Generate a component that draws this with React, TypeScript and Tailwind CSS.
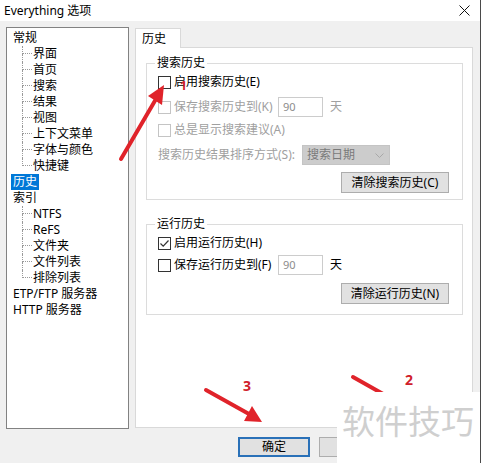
import type { ReactNode } from 'react';

const generalItems = ['界面', '首页', '搜索', '结果', '视图', '上下文菜单', '字体与颜色', '快捷键'];
const indexItems = ['NTFS', 'ReFS', '文件夹', '文件列表', '排除列表'];

function RootNode({ label, selected }: { label: string; selected?: boolean }) {
  return (
    <div className="flex h-4 items-center pl-[4px]">
      <span className={selected ? 'bg-[#0078d7] px-[2px] leading-4 text-white' : 'px-[2px] leading-4'}>{label}</span>
    </div>
  );
}

function ChildNode({ label, last }: { label: string; last?: boolean }) {
  return (
    <div className="flex h-4 items-center">
      <div className="flex h-full w-[10px] flex-col">
        <div className="h-1/2 border-b border-l border-dotted border-[#9a9a9a]" />
        <div className={last ? 'h-1/2' : 'h-1/2 border-l border-dotted border-[#9a9a9a]'} />
      </div>
      <span className="pl-[1px] leading-4">{label}</span>
    </div>
  );
}

function Checkbox({ checked, disabled }: { checked?: boolean; disabled?: boolean }) {
  return (
    <span
      className={`flex h-[13px] w-[13px] shrink-0 items-center justify-center border bg-white ${
        disabled ? 'border-[#c4c4c4]' : 'border-[#333333]'
      }`}
    >
      {checked && (
        <svg width="11" height="11" viewBox="0 0 11 11">
          <polyline points="1.5,5.5 4.2,8.2 9.5,2.5" fill="none" stroke="#333" strokeWidth="1.2" />
        </svg>
      )}
    </span>
  );
}

function Check({ label, checked, disabled, children }: { label: string; checked?: boolean; disabled?: boolean; children?: ReactNode }) {
  return (
    <div className={`flex h-[20px] items-center gap-[3px] ${disabled ? 'text-[#a0a0a0]' : 'text-black'}`}>
      <Checkbox checked={checked} disabled={disabled} />
      <span className="whitespace-nowrap leading-4">{label}</span>
      {children}
    </div>
  );
}

function DaysInput() {
  return (
    <div className="flex items-center">
      <div className="h-[20px] w-[45px] border border-[#cccccc] bg-white pl-[4px] text-[11px] leading-[18px] text-[#8c8c8c]">90</div>
      <span className="ml-[7px] leading-4">天</span>
    </div>
  );
}

function WinButton({ label, primary }: { label: string; primary?: boolean }) {
  return (
    <div
      className={`flex items-center justify-center bg-[#e1e1e1] leading-4 text-black ${
        primary ? 'h-[20px] w-[72px] border-2 border-[#2a71b8]' : 'h-[21px] w-[108px] border border-[#adadad]'
      }`}
    >
      {label}
    </div>
  );
}

function GroupBox({ title, className, children }: { title: string; className?: string; children: ReactNode }) {
  return (
    <fieldset className={`border border-[#dcdcdc] pl-[11px] pr-[13px] ${className ?? ''}`}>
      <legend className="ml-[-3px] px-[2px] leading-4">{title}</legend>
      {children}
    </fieldset>
  );
}

export default function App() {
  return (
    <div className="relative h-[463px] w-[481px] overflow-hidden border-r border-[#4a4a4a] bg-[#f0f0f0] font-[Noto_Sans,Noto_Sans_CJK_SC,sans-serif] text-[12px] text-black">
      {/* title bar */}
      <div className="flex h-[21px] items-center justify-between bg-white pl-[4px] pr-[10px]">
        <span className="leading-4">Everything 选项</span>
        <svg width="11" height="11" viewBox="0 0 11 11">
          <path d="M0.5 0.5 L10.5 10.5 M10.5 0.5 L0.5 10.5" stroke="#111" strokeWidth="1" />
        </svg>
      </div>

      <div className="flex gap-[6px] pl-[6px] pt-[6px]">
        {/* tree */}
        <div className="h-[402px] w-[123px] border border-[#828282] bg-white pt-[2px]">
          <RootNode label="常规" />
          <div className="ml-[15px]">
            {generalItems.map((t, i) => (
              <ChildNode key={t} label={t} last={i === generalItems.length - 1} />
            ))}
          </div>
          <RootNode label="历史" selected />
          <RootNode label="索引" />
          <div className="ml-[15px]">
            {indexItems.map((t, i) => (
              <ChildNode key={t} label={t} last={i === indexItems.length - 1} />
            ))}
          </div>
          <RootNode label="ETP/FTP 服务器" />
          <RootNode label="HTTP 服务器" />
        </div>

        {/* tab page */}
        <div className="mt-[1px] flex w-[338px] flex-col">
          <div className="flex h-[19px]">
            <div className="relative z-10 h-[20px] w-[46px] border border-b-0 border-[#d9d9d9] bg-white pl-[6px] leading-[19px]">历史</div>
          </div>
          <div className="h-[381px] border border-[#d9d9d9] bg-white pl-[10px] pr-[9px] pt-[7px]">
            <GroupBox title="搜索历史" className="pb-[6px]">
              <div className="mt-[1px]">
                <Check label="启用搜索历史(E)" />
              </div>
              <div className="mt-[4px] flex h-[22px] items-center">
                <div className="w-[120px]">
                  <Check label="保存搜索历史到(K)" disabled />
                </div>
                <div className="text-[#a0a0a0]">
                  <DaysInput />
                </div>
              </div>
              <div className="mt-[2px]">
                <Check label="总是显示搜索建议(A)" disabled />
              </div>
              <div className="mt-[5px] flex h-[20px] items-center text-[#a0a0a0]">
                <span className="w-[140px] whitespace-nowrap leading-4">搜索历史结果排序方式(S):</span>
                <div className="ml-[4px] flex h-[20px] w-[88px] items-center justify-between border border-[#c4c4c4] bg-[#cccccc] pl-[4px] pr-[5px] text-[#7a7a7a]">
                  <span className="leading-4">搜索日期</span>
                  <svg width="9" height="5" viewBox="0 0 9 5">
                    <polyline points="0.5,0.5 4.5,4.5 8.5,0.5" fill="none" stroke="#a8a8a8" strokeWidth="1" />
                  </svg>
                </div>
              </div>
              <div className="mt-[7px] flex justify-end">
                <WinButton label="清除搜索历史(C)" />
              </div>
            </GroupBox>

            <GroupBox title="运行历史" className="mt-[16px] pb-[10px]">
              <div className="mt-[1px]">
                <Check label="启用运行历史(H)" checked />
              </div>
              <div className="mt-[1px] flex h-[22px] items-center">
                <div className="w-[120px]">
                  <Check label="保存运行历史到(F)" />
                </div>
                <DaysInput />
              </div>
              <div className="mt-[7px] flex justify-end">
                <WinButton label="清除运行历史(N)" />
              </div>
            </GroupBox>
          </div>
        </div>
      </div>

      {/* dialog buttons */}
      <div className="mt-[8px] flex justify-end gap-[9px] pr-[8px]">
        <WinButton label="确定" primary />
        <div className="h-[20px] w-[72px] border border-[#adadad] bg-[#e1e1e1]" />
        <div className="h-[20px] w-[72px] border border-[#adadad] bg-[#e1e1e1]" />
      </div>

      {/* annotations */}
      <svg className="pointer-events-none absolute left-0 top-0" width="481" height="463" viewBox="0 0 481 463">
        <line x1="121" y1="159" x2="156" y2="99" stroke="#e0232a" strokeWidth="4" strokeLinecap="round" />
        <polygon points="164,85 148,96 162,105" fill="#e0232a" />
        <line x1="206" y1="390" x2="249" y2="414" stroke="#e0232a" strokeWidth="4" strokeLinecap="round" />
        <polygon points="262,422 244,421 252,406" fill="#e0232a" />
        <line x1="353" y1="377" x2="392" y2="399" stroke="#e0232a" strokeWidth="4" strokeLinecap="round" />
      </svg>
      <span className="absolute left-[180px] top-[80px] font-bold leading-3 text-[#d0202a]">1</span>
      <span className="absolute left-[243px] top-[378px] text-[14px] font-bold leading-4 text-[#d0202a]">3</span>
      <span className="absolute left-[405px] top-[372px] text-[14px] font-bold leading-4 text-[#d0202a]">2</span>

      {/* watermark */}
      <div className="absolute bottom-0 left-[337px] right-0 top-[392px] bg-white pl-[5px] pt-[10px]">
        <span className="whitespace-nowrap text-[33px] leading-[40px] text-[#cfcfcf]">软件技巧</span>
      </div>
    </div>
  );
}
